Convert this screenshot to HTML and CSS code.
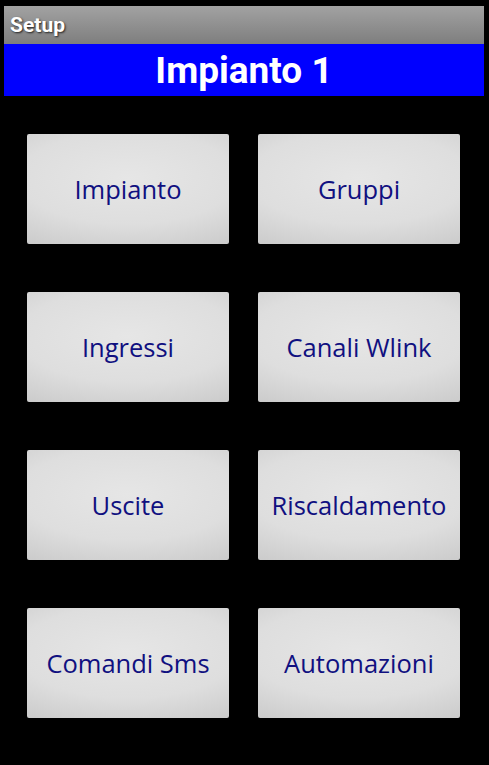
FILE: index.html
```html
<!DOCTYPE html>
<html lang="it">
<head>
  <meta charset="UTF-8" />
  <meta name="viewport" content="width=device-width, initial-scale=1.0"/>
  <title>Setup</title>
  <link rel="stylesheet" href="styles.css">
</head>
<body>

<div class="titlebar">Setup</div>
<header class="plant">Impianto 1</header>

<div class="menu">
  <button class="menu-btn">Impianto</button>
  <button class="menu-btn">Gruppi</button>
  <button class="menu-btn">Ingressi</button>
  <button class="menu-btn">Canali Wlink</button>
  <button class="menu-btn">Uscite</button>
  <button class="menu-btn">Riscaldamento</button>
  <button class="menu-btn">Comandi Sms</button>
  <button class="menu-btn">Automazioni</button>
</div>

</body>
</html>
```

FILE: styles.css
```css
html, body {
  margin: 0;
  padding: 0;
  background-color: #000;
  height: 765px;
  overflow: hidden;
}
body {
  font-family: 'Open Sans', Roboto, sans-serif;
}
.titlebar {
  margin: 6px 5px 0 4px;
  height: 38px;
  line-height: 38px;
  padding-left: 6px;
  background: linear-gradient(#a2a2a2, #7e7e7e);
  color: #fff;
  font-family: Roboto, sans-serif;
  font-weight: bold;
  font-size: 21px;
  text-shadow: 1px 1px 2px #222;
}
.plant {
  margin: 0 5px 0 4px;
  height: 52px;
  line-height: 54px;
  background-color: #0000ff;
  color: #fff;
  text-align: center;
  font-family: Roboto, sans-serif;
  font-weight: bold;
  font-size: 37px;
}
.menu {
  display: grid;
  grid-template-columns: 202px 202px;
  column-gap: 29px;
  row-gap: 48px;
  padding: 38px 0 0 27px;
}
.menu-btn {
  height: 110px;
  border: none;
  border-radius: 2px;
  padding: 0;
  background: radial-gradient(ellipse 90% 70% at 50% 40%, #e6e6e6 0%, #dedede 60%, #cccccc 100%);
  color: #101080;
  font-family: 'Open Sans', Roboto, sans-serif;
  font-size: 25.5px;
  cursor: pointer;
}
```
